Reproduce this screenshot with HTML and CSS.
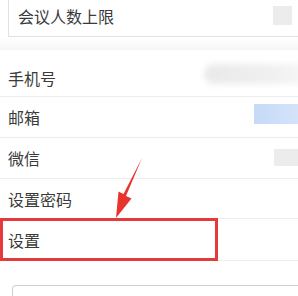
FILE: index.html
```html
<!DOCTYPE html>
<html lang="zh">
<head>
<meta charset="utf-8">
<link rel="stylesheet" href="styles.css">
</head>
<body>
<div class="page">
  <div class="top-card">
    <span class="label">会议人数上限</span>
    <span class="chip grey"></span>
  </div>
  <div class="gap"></div>
  <div class="list">
    <div class="row first">
      <span class="label">手机号</span>
      <span class="blob"></span>
    </div>
    <div class="row">
      <span class="label">邮箱</span>
      <span class="chip blue"></span>
    </div>
    <div class="row">
      <span class="label">微信</span>
      <span class="chip grey small"></span>
    </div>
    <div class="row">
      <span class="label">设置密码</span>
    </div>
    <div class="row target">
      <span class="label">设置</span>
      <span class="highlight"></span>
    </div>
  </div>
  <div class="input-box"></div>
  <svg class="arrow" width="60" height="70" viewBox="0 0 60 70">
    <path d="M52 6 L36 44 L41.5 46.5 L26 66 L28.5 39.5 L33.5 42 Z" fill="#e8342f"/>
  </svg>
</div>
</body>
</html>
```
FILE: styles.css
```css
* { box-sizing: border-box; }
html, body { margin: 0; padding: 0; background: #fff; }
body {
  font-family: "Noto Sans CJK SC", "Noto Sans", sans-serif;
  color: #3a3a3a;
  width: 298px;
  height: 296px;
  overflow: hidden;
}
.page { position: relative; width: 298px; height: 296px; }
.top-card {
  margin-left: 8px;
  height: 37px;
  border-left: 1px solid #e2e2e2;
  border-bottom: 1px solid #e2e2e2;
  display: flex;
  align-items: center;
  justify-content: space-between;
  padding-left: 9px;
  padding-right: 6px;
}
.label { font-size: 16px; line-height: 20px; }
.top-card .label { margin-top: -4px; }
.chip { display: block; }
.chip.grey { width: 19px; height: 19px; background: #ececec; margin-top: -6px; }
.chip.grey.small { width: 24px; height: 17px; margin: -2px 0 0 0; }
.chip.blue { width: 44px; height: 20px; background: linear-gradient(90deg, #c6daf7, #d4e3f9); margin: -6px 0 0 0; }
.gap {
  height: 13px;
  background: linear-gradient(#ffffff, #f6f6f6);
}
.list { display: flex; flex-direction: column; }
.row {
  height: 41px;
  border-bottom: 1px solid #ececec;
  display: flex;
  align-items: center;
  justify-content: space-between;
  padding-left: 8px;
  padding-right: 0;
  position: relative;
}
.row.first { height: 47px; padding-top: 10px; }
.row.target { height: 42px; }
.row:nth-child(4) { height: 40px; }
.blob {
  display: block;
  width: 98px;
  height: 20px;
  margin-right: -4px;
  margin-top: -8px;
  background: linear-gradient(90deg, #e9e9e9, #efefef 60%, #f5f5f5);
  border-radius: 14px 4px 0 14px;
  filter: blur(3px);
}
.highlight {
  position: absolute;
  left: 0;
  top: -1px;
  width: 218px;
  height: 43px;
  border: 3px solid #e53a3a;
}
.input-box {
  margin: 24px 0 0 12px;
  height: 20px;
  border: 1px solid #cfcfcf;
  border-right: none;
  border-radius: 4px 0 0 0;
}
.arrow { position: absolute; left: 90px; top: 152px; }
```
